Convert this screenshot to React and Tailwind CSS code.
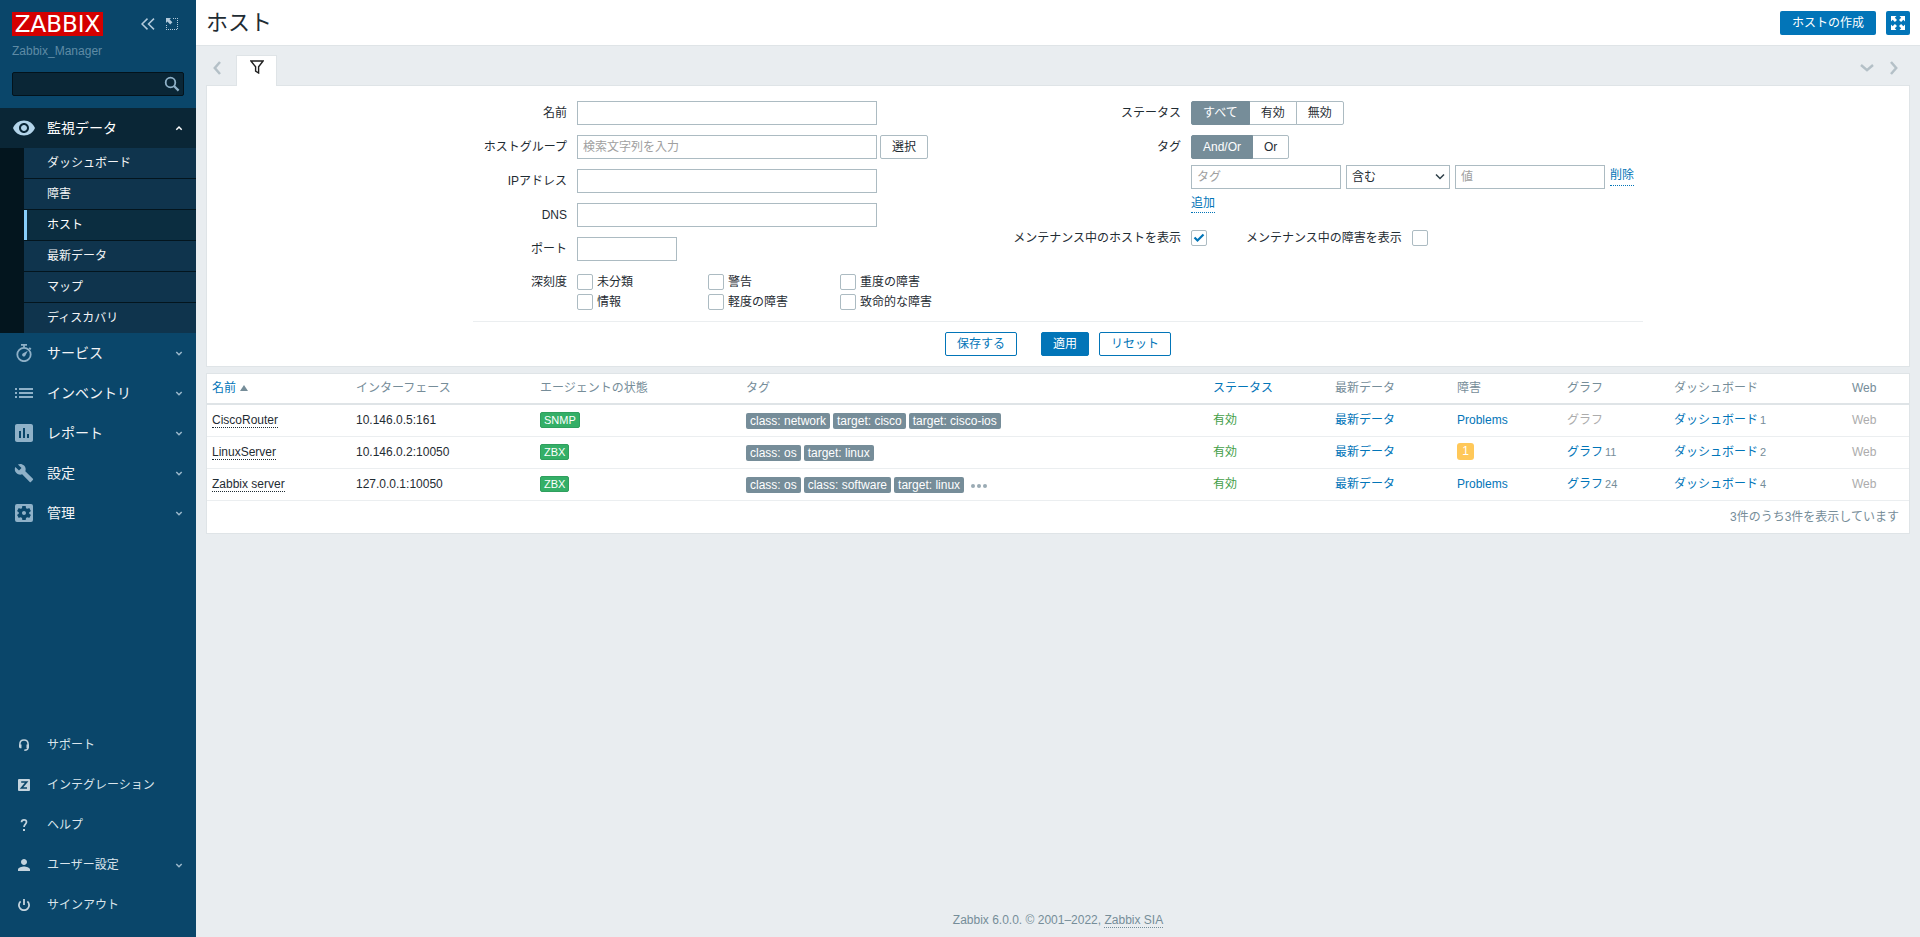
import { useState } from 'react';
import {
  MdVisibility,
  MdAssessment,
  MdBuild,
  MdSettingsApplications,
  MdPerson,
} from 'react-icons/md';

const subMenu = ['ダッシュボード', '障害', 'ホスト', '最新データ', 'マップ', 'ディスカバリ'];

const severities = ['未分類', '警告', '重度の障害', '情報', '軽度の障害', '致命的な障害'];

const hosts = [
  {
    name: 'CiscoRouter',
    iface: '10.146.0.5:161',
    agent: 'SNMP',
    tags: ['class: network', 'target: cisco', 'target: cisco-ios'],
    more: false,
    problems: 0,
    graphs: 0,
    dashboards: 1,
  },
  {
    name: 'LinuxServer',
    iface: '10.146.0.2:10050',
    agent: 'ZBX',
    tags: ['class: os', 'target: linux'],
    more: false,
    problems: 1,
    graphs: 11,
    dashboards: 2,
  },
  {
    name: 'Zabbix server',
    iface: '127.0.0.1:10050',
    agent: 'ZBX',
    tags: ['class: os', 'class: software', 'target: linux'],
    more: true,
    problems: 0,
    graphs: 24,
    dashboards: 4,
  },
];

/* ---------- icons ---------- */

function StopwatchIcon() {
  return (
    <svg className="w-4 h-[18px]" viewBox="0 0 16 18" fill="none" stroke="currentColor" strokeWidth="1.800">
      <circle cx="8" cy="10.500" r="6.700" />
      <path d="M5 .9h6M8 1v2.500M13.200 3.800l1.600 1.600" />
      <path d="M11.800 6.800l-2.400 4.700a1.700 1.700 0 1 1-2.200-2.200z" fill="currentColor" stroke="none" />
    </svg>
  );
}

function ListIcon() {
  return (
    <svg className="w-[18px] h-[12px]" viewBox="0 0 18 12" fill="currentColor">
      <path d="M0 1h2v2H0zM4 1h14v2H4zM0 5h2v2H0zM4 5h14v2H4zM0 9h2v2H0zM4 9h14v2H4z" />
    </svg>
  );
}

function SupportIcon() {
  return (
    <svg className="w-3 h-3" viewBox="0 0 12 12" fill="none" stroke="currentColor" strokeWidth="1.500">
      <path d="M1.900 7V5C1.900 2.500 3.600.9 6 .9s4.100 1.600 4.100 4.100v3.500c0 1.800-1.300 2.600-3.800 2.700" />
      <path d="M1 5.500h2.500v3.700H2L1 8.200zM8.500 5.500H11v2.900l-1 .8H8.500z" fill="currentColor" stroke="none" />
    </svg>
  );
}

function IntegrationIcon() {
  return (
    <svg className="w-3 h-3" viewBox="0 0 12 12">
      <rect width="12" height="12" rx="1" fill="currentColor" />
      <path d="M3.200 3h5.400L3.600 9H9" fill="none" stroke="#0a466a" strokeWidth="1.700" />
    </svg>
  );
}

function HelpIcon() {
  return (
    <svg className="w-3 h-3" viewBox="0 0 12 12" fill="none" stroke="currentColor" strokeWidth="1.700">
      <path d="M3.500 3.300C3.600 1.700 4.600.9 6 .9c1.500 0 2.500.9 2.500 2.200C8.500 5 6 5.200 6 8" />
      <path d="M6 10v2" strokeWidth="2" />
    </svg>
  );
}

function PowerIcon() {
  return (
    <svg className="w-3 h-3" viewBox="0 0 12 12" fill="none" stroke="currentColor" strokeWidth="1.800">
      <path d="M2.600 2.300a5.100 5.100 0 1 0 6.800 0M6 0v6" />
    </svg>
  );
}

function Chevron({ up = false }) {
  return (
    <svg className="w-2 h-2 mr-[1px]" viewBox="0 0 8 8" fill="none" stroke="currentColor" strokeWidth="1.500">
      <path d={up ? 'M1.300 5.700L4 3l2.700 2.700' : 'M1.300 3L4 5.700 6.700 3'} />
    </svg>
  );
}

/* ---------- sidebar ---------- */

const mainMenu = [
  { label: 'サービス', icon: <StopwatchIcon /> },
  { label: 'インベントリ', icon: <ListIcon /> },
  { label: 'レポート', icon: <MdAssessment className="w-6 h-6" /> },
  { label: '設定', icon: <MdBuild className="w-5 h-5" /> },
  { label: '管理', icon: <MdSettingsApplications className="w-6 h-6" /> },
];

const userMenu = [
  { label: 'サポート', icon: <SupportIcon /> },
  { label: 'インテグレーション', icon: <IntegrationIcon /> },
  { label: 'ヘルプ', icon: <HelpIcon /> },
  { label: 'ユーザー設定', icon: <MdPerson className="w-[18px] h-[18px]" />, expandable: true },
  { label: 'サインアウト', icon: <PowerIcon /> },
];

function Sidebar() {
  return (
    <aside className="flex flex-col shrink-0 w-[196px] bg-[#0a466a] text-white">
      <div className="flex items-start justify-between pl-3 pr-[18px] pt-3">
        <a href="#" className="flex items-center justify-center w-[91px] h-6 bg-[#d40000] font-['DejaVu_Sans',sans-serif] text-[23px] leading-6">ZABBIX</a>
        <div className="flex items-center gap-[11px] h-6 text-[#b3cadb]">
          <button aria-label="サイドバーを折りたたむ">
            <svg className="w-[14px] h-3" viewBox="0 0 14 12" fill="none" stroke="currentColor" strokeWidth="1.500">
              <path d="M6.500.6L1 6l5.500 5.400M13 .6L7.500 6l5.500 5.400" />
            </svg>
          </button>
          <button aria-label="サイドバーを隠す">
            <svg className="w-3 h-3" viewBox="0 0 12 12" fill="currentColor">
              <path d="M0 0h5L3.600 1.400 6.400 4.200 4.200 6.400 1.400 3.600 0 5z" />
              <path d="M7 .5h5M11.500 2v10M0 11.500h11M.5 7v4" fill="none" stroke="currentColor" strokeDasharray="1 1" shapeRendering="crispEdges" />
            </svg>
          </button>
        </div>
      </div>
      <div className="px-3 mt-[7px] text-xs leading-4 text-[#5f8ba5]">Zabbix_Manager</div>
      <div className="relative mx-3 mt-[13px]">
        <input
          type="text"
          aria-label="検索"
          className="block w-full h-6 pl-2 pr-7 rounded-[2px] border border-[#03131c] bg-[#0a2636] text-xs outline-none"
        />
        <button aria-label="検索" className="absolute right-1 top-[4px] text-[#8fb1c8]">
          <svg className="w-4 h-4" viewBox="0 0 16 16" fill="none" stroke="currentColor" strokeWidth="1.800">
            <circle cx="6.500" cy="6.500" r="4.800" />
            <path d="M10 10l4.600 4.600" strokeWidth="2.200" />
          </svg>
        </button>
      </div>

      <nav className="mt-3 text-sm">
        <a href="#" className="flex items-center h-10 pr-3 bg-[#0a2636]">
          <span className="flex justify-center w-[47px] text-[#b3d4ea]">
            <MdVisibility className="w-6 h-6" />
          </span>
          <span className="flex-1">監視データ</span>
          <Chevron up />
        </a>
        <ul className="pl-6 bg-[#03151e] text-xs divide-y divide-[#03151e]">
          {subMenu.map(item => (
            <li key={item}>
              <a
                href="#"
                className={`block h-[30px] leading-[30px] border-l-3 pl-5 ${
                  item === 'ホスト'
                    ? 'bg-[#0b2d40] border-[#87cdfa] text-white'
                    : 'bg-[#0f344d] border-[#0f344d] text-gray-100'
                }`}
              >
                {item}
              </a>
            </li>
          ))}
        </ul>
        {mainMenu.map(({ label, icon }) => (
          <a key={label} href="#" className="flex items-center h-10 pr-3 text-gray-100">
            <span className="flex justify-center w-[47px] text-[#8fb1c8]">{icon}</span>
            <span className="flex-1">{label}</span>
            <span className="text-[#9cb9cc]"><Chevron /></span>
          </a>
        ))}
      </nav>

      <nav className="mt-auto pb-3 text-xs">
        {userMenu.map(({ label, icon, expandable }) => (
          <a key={label} href="#" className="flex items-center h-10 pr-3 text-[#dae5ec]">
            <span className="flex justify-center w-[47px] text-[#c4d4de]">{icon}</span>
            <span className="flex-1">{label}</span>
            {expandable && <span className="text-[#9cb9cc]"><Chevron /></span>}
          </a>
        ))}
      </nav>
    </aside>
  );
}

/* ---------- form controls ---------- */

const inputClass = 'block h-6 px-[5px] border border-[#acbbc2] bg-white placeholder:text-[#a0a0a0] outline-none focus:border-[#0275b8]';
const linkClass = 'text-[#0275b8]';

function Checkbox({ id, defaultChecked }) {
  return (
    <span className="relative flex w-4 h-4">
      <input
        id={id}
        type="checkbox"
        defaultChecked={defaultChecked}
        className="peer appearance-none w-4 h-4 rounded-[2px] border border-[#acbbc2] bg-white"
      />
      <svg
        className="hidden peer-checked:block absolute inset-0 w-4 h-4 pointer-events-none text-[#0275b8]"
        viewBox="0 0 16 16"
        fill="none"
        stroke="currentColor"
        strokeWidth="2.200"
      >
        <path d="M3.500 7.500l3 3 6-6" />
      </svg>
    </span>
  );
}

function Segmented({ name, options, value, onChange }) {
  return (
    <div className="flex" role="radiogroup" aria-label={name}>
      {options.map(option => (
        <label
          key={option}
          className={`relative h-6 leading-[22px] px-[11px] border first:rounded-l-[2px] last:rounded-r-[2px] not-first:-ml-px ${
            option === value
              ? 'z-10 bg-[#768d99] border-[#768d99] text-white'
              : 'bg-white border-[#acbbc2]'
          }`}
        >
          <input
            type="radio"
            name={name}
            className="sr-only"
            checked={option === value}
            onChange={() => onChange(option)}
          />
          {option}
        </label>
      ))}
    </div>
  );
}

function Field({ id, label, children }) {
  return (
    <div className="flex gap-[10px]">
      <label htmlFor={id} className="w-[94px] text-right leading-6">{label}</label>
      {children}
    </div>
  );
}

function Filter() {
  const [status, setStatus] = useState('すべて');
  const [tagMode, setTagMode] = useState('And/Or');

  return (
    <form className="px-5 pt-[15px] pb-[10px] bg-white border border-[#dfe4e7]" onSubmit={e => e.preventDefault()}>
      <div className="max-w-[1170px] mx-auto">
        <div className="flex justify-between">
          <div className="flex flex-col gap-[10px]">
            <Field id="name" label="名前">
              <input id="name" type="text" className={`${inputClass} w-[300px]`} />
            </Field>
            <Field id="groups" label="ホストグループ">
              <div className="flex gap-[3px]">
                <input id="groups" type="text" placeholder="検索文字列を入力" className={`${inputClass} w-[300px]`} />
                <button type="button" className="h-6 px-[11px] rounded-[2px] border border-[#acbbc2]">選択</button>
              </div>
            </Field>
            <Field id="ip" label="IPアドレス">
              <input id="ip" type="text" className={`${inputClass} w-[300px]`} />
            </Field>
            <Field id="dns" label="DNS">
              <input id="dns" type="text" className={`${inputClass} w-[300px]`} />
            </Field>
            <Field id="port" label="ポート">
              <input id="port" type="text" className={`${inputClass} w-[100px]`} />
            </Field>
            <div className="flex gap-[10px] pt-px">
              <span className="w-[94px] text-right leading-5">深刻度</span>
              <div className="grid grid-cols-[131px_132px_auto]">
                {severities.map((s, i) => (
                  <div key={s} className="flex items-center gap-1 h-5">
                    <Checkbox id={`severity-${i}`} />
                    <label htmlFor={`severity-${i}`}>{s}</label>
                  </div>
                ))}
              </div>
            </div>
          </div>

          <div className="flex flex-col w-[630px]">
            <div className="flex gap-[10px]">
              <span className="w-[168px] text-right leading-6">ステータス</span>
              <Segmented name="ステータス" options={['すべて', '有効', '無効']} value={status} onChange={setStatus} />
            </div>
            <div className="flex gap-[10px] mt-[10px]">
              <span className="w-[168px] text-right leading-6">タグ</span>
              <div>
                <Segmented name="タグ" options={['And/Or', 'Or']} value={tagMode} onChange={setTagMode} />
                <div className="flex gap-[5px] mt-[6px]">
                  <input type="text" aria-label="タグ" placeholder="タグ" className={`${inputClass} w-[150px]`} />
                  <div className="relative">
                    <select aria-label="条件" className={`${inputClass} w-[104px] appearance-none`} defaultValue="含む">
                      <option>含む</option>
                      <option>等しい</option>
                    </select>
                    <svg className="absolute right-[5px] top-2 w-[10px] h-2 pointer-events-none" viewBox="0 0 10 8" fill="none" stroke="#2e3f48" strokeWidth="1.500">
                      <path d="M1 1.500l4 4 4-4" />
                    </svg>
                  </div>
                  <input type="text" aria-label="値" placeholder="値" className={`${inputClass} w-[150px]`} />
                  <button type="button" className={`${linkClass} self-start h-[21px] border-b border-dotted border-[#0275b8]`}>削除</button>
                </div>
                <button type="button" className={`${linkClass} block mt-[5px] h-[19px] border-b border-dotted border-[#0275b8]`}>追加</button>
              </div>
            </div>
            <div className="flex items-center gap-[10px] h-6 mt-[13px]">
              <label htmlFor="maintenance" className="w-[168px] text-right">メンテナンス中のホストを表示</label>
              <Checkbox id="maintenance" defaultChecked />
              <label htmlFor="suppressed" className="pl-[29px]">メンテナンス中の障害を表示</label>
              <Checkbox id="suppressed" />
            </div>
          </div>
        </div>

        <div className="flex justify-center mt-[9px] pt-[10px] border-t border-[#ebeef0]">
          <button type="button" className="h-6 px-[11px] mr-6 rounded-[2px] border border-[#0275b8] text-[#0275b8]">保存する</button>
          <button type="submit" className="h-6 px-[11px] mr-[10px] rounded-[2px] border border-[#0275b8] bg-[#0275b8] text-white">適用</button>
          <button type="reset" className="h-6 px-[11px] rounded-[2px] border border-[#0275b8] text-[#0275b8]">リセット</button>
        </div>
      </div>
    </form>
  );
}

/* ---------- host list ---------- */

function HostTable() {
  return (
    <div className="mt-[6px] bg-white border border-[#dfe4e7]">
      <table className="w-full table-fixed border-separate border-spacing-0 text-left [&_td]:px-[5px] [&_th]:px-[5px] [&_th]:pb-[2px] [&_td]:pb-[2px] [&_th]:font-normal [&_th]:h-[31px] [&_th]:border-b-2 [&_th]:border-[#dfe4e7] [&_td]:h-8 [&_td]:border-b [&_td]:border-[#ebeef0]">
        <thead className="text-[#768d99]">
          <tr>
            <th className="w-[144px]">
              <a href="#" className={linkClass}>名前</a>
              <svg className="inline-block ml-1 w-2 h-[6px]" viewBox="0 0 8 6" fill="#768d99">
                <path d="M4 0l4 6H0z" />
              </svg>
            </th>
            <th className="w-[184px]">インターフェース</th>
            <th className="w-[206px]">エージェントの状態</th>
            <th>タグ</th>
            <th className="w-[122px]"><a href="#" className={linkClass}>ステータス</a></th>
            <th className="w-[122px]">最新データ</th>
            <th className="w-[110px]">障害</th>
            <th className="w-[107px]">グラフ</th>
            <th className="w-[178px]">ダッシュボード</th>
            <th className="w-[62px]">Web</th>
          </tr>
        </thead>
        <tbody>
          {hosts.map(host => (
            <tr key={host.name}>
              <td>
                <a href="#" className="border-b border-dotted border-[#1f2c33]">{host.name}</a>
              </td>
              <td>{host.iface}</td>
              <td>
                <span className="inline-block h-4 px-[3px] leading-[14px] text-[11px] align-middle rounded-[2px] border border-[#2f9f5e] bg-[#34af67] text-white">
                  {host.agent}
                </span>
              </td>
              <td>
                <div className="flex items-center gap-[3px] pt-[3px]">
                  {host.tags.map(tag => (
                    <span key={tag} className="h-4 px-1 leading-4 rounded-[2px] bg-[#768d99] text-white">{tag}</span>
                  ))}
                  {host.more && (
                    <button aria-label="タグ" className="ml-1">
                      <svg className="w-4 h-4" viewBox="0 0 16 16" fill="#9aabb4">
                        <circle cx="2" cy="9" r="2" />
                        <circle cx="8" cy="9" r="2" />
                        <circle cx="14" cy="9" r="2" />
                      </svg>
                    </button>
                  )}
                </div>
              </td>
              <td><a href="#" className="text-[#429e47]">有効</a></td>
              <td><a href="#" className={linkClass}>最新データ</a></td>
              <td>
                {host.problems > 0 ? (
                  <a href="#" className="flex justify-center w-[17px] h-[17px] leading-[17px] rounded-[3px] bg-[#ffc859] text-white">{host.problems}</a>
                ) : (
                  <a href="#" className={linkClass}>Problems</a>
                )}
              </td>
              <td>
                {host.graphs > 0 ? (
                  <>
                    <a href="#" className={linkClass}>グラフ</a>
                    <sup className="static align-baseline ml-[2px] text-[11px] text-[#768d99]">{host.graphs}</sup>
                  </>
                ) : (
                  <span className="text-[#acacac]">グラフ</span>
                )}
              </td>
              <td>
                <a href="#" className={linkClass}>ダッシュボード</a>
                <sup className="static align-baseline ml-[2px] text-[11px] text-[#768d99]">{host.dashboards}</sup>
              </td>
              <td className="text-[#acacac]">Web</td>
            </tr>
          ))}
        </tbody>
      </table>
      <div className="px-[10px] h-8 leading-8 text-right text-[#768d99]">3件のうち3件を表示しています</div>
    </div>
  );
}

export default function App() {
  return (
    <div className="flex min-h-screen bg-[#e9edf0] font-['Liberation_Sans','Noto_Sans_CJK_JP',sans-serif] text-xs text-[#1f2c33]">
      <Sidebar />
      <div className="flex flex-col flex-1 min-w-0">
        <header className="flex items-center justify-between h-[46px] px-[10px] bg-white border-b border-[#dfe4e7]">
          <h1 className="text-[22px] leading-6">ホスト</h1>
          <div className="flex gap-[10px]">
            <button className="h-6 px-3 rounded-[2px] bg-[#0275b8] text-white">ホストの作成</button>
            <button aria-label="全画面表示" className="flex items-center justify-center w-6 h-6 rounded-[2px] bg-[#0275b8] text-white">
              <svg className="w-[14px] h-[14px]" viewBox="0 0 14 14" fill="currentColor">
                <path d="M0 0h5.500L3.800 1.700l2.200 2.200L3.900 6 1.700 3.800 0 5.500z" />
                <path d="M14 0v5.500l-1.700-1.700L10.100 6 8 3.900l2.200-2.200L8.500 0z" />
                <path d="M0 14V8.500l1.700 1.700L3.900 8 6 10.100l-2.200 2.200L5.500 14z" />
                <path d="M14 14H8.500l1.700-1.700L8 10.100 10.100 8l2.200 2.200L14 8.500z" />
              </svg>
            </button>
          </div>
        </header>

        <main className="px-[10px] pt-[9px]">
          <div className="flex items-center h-[30px] pl-[7px] pr-3 text-[#b4c0c7]">
            <button aria-label="前へ" className="mr-[15px] mb-1">
              <svg className="w-2 h-[14px]" viewBox="0 0 8 14" fill="none" stroke="currentColor" strokeWidth="2.500">
                <path d="M7 1L1.800 7 7 13" />
              </svg>
            </button>
            <button aria-label="フィルター" className="relative flex justify-center w-[41px] h-[31px] -mb-px pt-1 bg-white border border-b-0 border-[#dfe4e7] text-[#1f1f1f]">
              <svg className="w-[14px] h-[14px]" viewBox="0 0 14 14" fill="none" stroke="currentColor" strokeWidth="1.400">
                <path d="M.9 1h12.200L8.600 6.800V13l-3-1.800V6.800z" />
              </svg>
            </button>
            <button aria-label="一覧" className="ml-auto mr-4 mb-1">
              <svg className="w-[14px] h-2" viewBox="0 0 14 8" fill="none" stroke="currentColor" strokeWidth="2.500">
                <path d="M1 1l6 5.200L13 1" />
              </svg>
            </button>
            <button aria-label="次へ" className="mb-1">
              <svg className="w-2 h-[14px]" viewBox="0 0 8 14" fill="none" stroke="currentColor" strokeWidth="2.500">
                <path d="M1 1l5.200 6L1 13" />
              </svg>
            </button>
          </div>
          <Filter />
          <HostTable />
        </main>

        <footer className="mt-auto pb-[9px] text-center text-[#768d99]">
          Zabbix 6.0.0. © 2001–2022, <a href="#" className="border-b border-dotted border-[#768d99]">Zabbix SIA</a>
        </footer>
      </div>
    </div>
  );
}
